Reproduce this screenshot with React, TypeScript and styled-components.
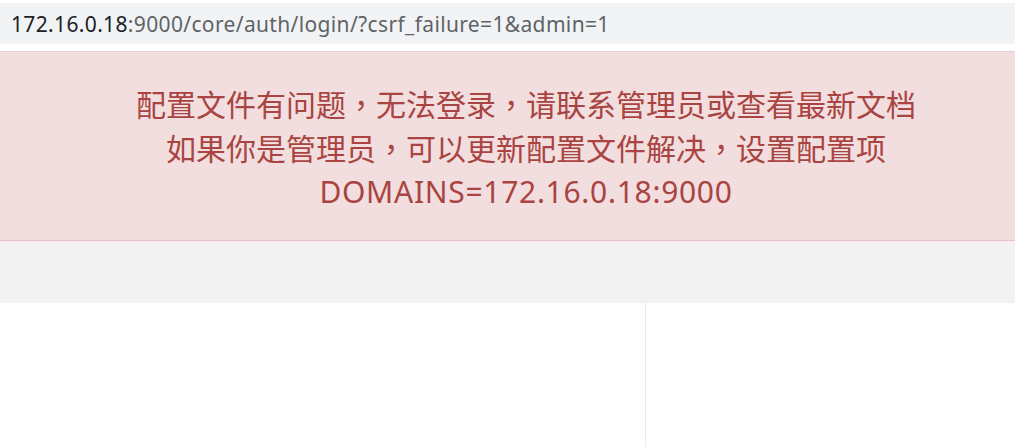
import React from 'react';
import styled, { createGlobalStyle } from 'styled-components';

const GlobalStyle = createGlobalStyle`
  html, body {
    margin: 0;
    padding: 0;
    background: #ffffff;
    font-family: 'Noto Sans', 'Noto Sans CJK SC', sans-serif;
  }
`;

const Page = styled.div`
  width: 1015px;
  height: 447px;
  overflow: hidden;
  display: flex;
  flex-direction: column;
`;

const AddressBar = styled.div`
  margin-top: 3px;
  height: 41px;
  background-color: #f1f3f4;
  display: flex;
  align-items: center;
  padding-left: 11px;
  font-size: 21px;
  letter-spacing: 0.35px;
  color: #5f6368;
  white-space: nowrap;
`;

const Host = styled.span`
  color: #202124;
`;

const Alert = styled.div`
  margin-top: 7px;
  border-top: 1px solid #ebccd1;
  border-bottom: 1px solid #e4c3c8;
  background-color: #f2dede;
  color: #a94442;
  font-size: 30px;
  line-height: 43px;
  text-align: center;
  padding: 30px 0 27px 37px;
  height: 131px;
`;

const Comma = styled.span`
  font-family: 'Noto Sans CJK TC', sans-serif;
`;

const Setting = styled.span`
  letter-spacing: 0.7px;
`;

const Glow = styled.div`
  height: 3px;
  background-color: #f8eff0;
`;

const Band = styled.div`
  height: 59px;
  background-color: #f2f2f2;
`;

const Columns = styled.div`
  flex: 1;
  display: grid;
  grid-template-columns: 646px 1fr;
`;

const Column = styled.div<{ $divider?: boolean }>`
  background: #ffffff;
  border-right: ${(p) => (p.$divider ? '1px solid #ebebeb' : 'none')};
`;

const App = () => {
  return (
    <Page>
      <GlobalStyle />
      <AddressBar>
        <Host>172.16.0.18</Host>:9000/core/auth/login/?csrf_failure=1&amp;admin=1
      </AddressBar>
      <Alert>
        配置文件有问题<Comma>，</Comma>无法登录<Comma>，</Comma>请联系管理员或查看最新文档
        <br />
        如果你是管理员<Comma>，</Comma>可以更新配置文件解决<Comma>，</Comma>设置配置项
        <br />
        <Setting>DOMAINS=172.16.0.18:9000</Setting>
      </Alert>
      <Glow />
      <Band />
      <Columns>
        <Column $divider />
        <Column />
      </Columns>
    </Page>
  );
};

export default App;
